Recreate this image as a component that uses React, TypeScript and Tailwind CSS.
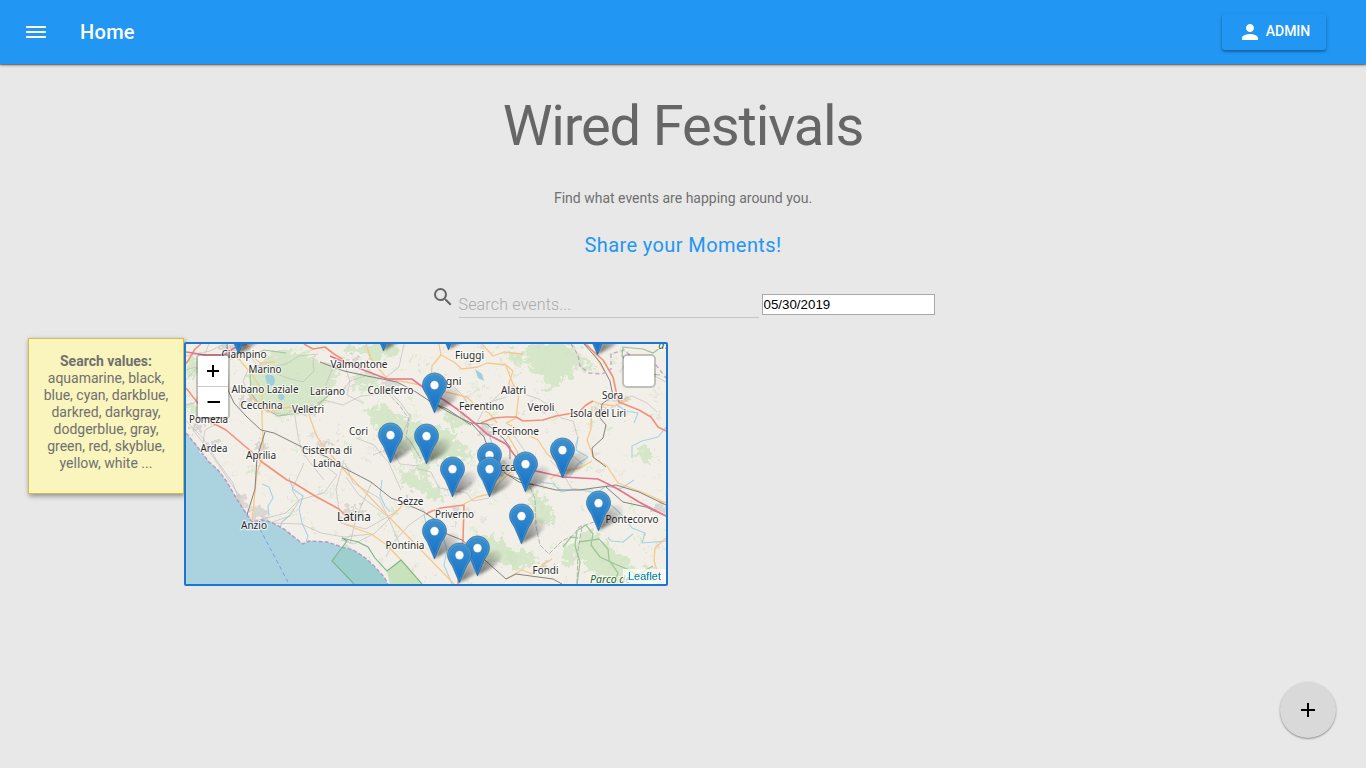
import React from "react";
import { MdAdd, MdPerson, MdSearch } from "react-icons/md";

type Pt = [number, number];

const PINS: Pt[] = [
  [238, 326], [383, 323], [448, 322], [597, 327],
  [434, 385], [390, 435], [426, 436], [562, 450], [489, 455], [525, 464], [452, 469], [489, 469],
  [598, 503], [521, 516], [434, 531], [477, 548], [459, 555],
];

type Label = { t: string; x: number; y: number; w: number; s?: number };

const LABELS: Label[] = [
  { t: "Ciampino", x: 244, y: 358, w: 45 },
  { t: "Marino", x: 265, y: 372.5, w: 33 },
  { t: "Albano Laziale", x: 265, y: 393, w: 67 },
  { t: "Cecchina", x: 261.5, y: 409, w: 42 },
  { t: "Lariano", x: 327.5, y: 394.5, w: 35 },
  { t: "Velletri", x: 308, y: 413, w: 32 },
  { t: "Valmontone", x: 359, y: 368, w: 57 },
  { t: "Colleferro", x: 390.5, y: 394, w: 46 },
  { t: "Fiuggi", x: 469.5, y: 359, w: 29 },
  { t: "Anagni", x: 444, y: 385, w: 35 },
  { t: "Ferentino", x: 481.5, y: 410, w: 45 },
  { t: "Alatri", x: 513.5, y: 394, w: 25 },
  { t: "Veroli", x: 541, y: 411, w: 27 },
  { t: "Sora", x: 612.5, y: 399, w: 21 },
  { t: "Isola del Liri", x: 598, y: 417, w: 56 },
  { t: "Frosinone", x: 515.5, y: 435, w: 47 },
  { t: "Pomezia", x: 208.5, y: 423, w: 39 },
  { t: "Ardea", x: 214, y: 451.5, w: 27 },
  { t: "Aprilia", x: 261, y: 458.5, w: 30 },
  { t: "Cori", x: 358.5, y: 434.5, w: 19 },
  { t: "Cisterna di", x: 327, y: 454, w: 50 },
  { t: "Latina", x: 327, y: 466.5, w: 28 },
  { t: "Ceccano", x: 508, y: 471, w: 40 },
  { t: "Sezze", x: 410.5, y: 505, w: 26 },
  { t: "Latina", x: 354, y: 521, w: 34, s: 12 },
  { t: "Priverno", x: 454.5, y: 517.5, w: 39 },
  { t: "Pontinia", x: 405, y: 549, w: 39 },
  { t: "Anzio", x: 254, y: 529, w: 26 },
  { t: "Fondi", x: 545.5, y: 574, w: 26 },
  { t: "Pontecorvo", x: 632, y: 523, w: 53 },
];

const WOODS = [
  "M264 358L280 350L306 353L316 361L334 364L338 378L331 392L318 405L302 411L286 417L270 412L258 407L254 397L250 376Z",
  "M344 344H400L398 358L385 354L375 367L365 352L348 355Z",
  "M352 377L367 371L380 378L376 389L357 388Z",
  "M365 410L385 404L396 416L411 419L428 424L444 429L456 436L463 446L474 454L469 462L449 456L439 462L417 459L400 447L381 440L374 425Z",
  "M526 344H573L580 356L594 366L590 373L577 366L568 377L558 386L547 388L543 376L531 370Z",
  "M506 350L519 353L531 361L526 367L511 360Z",
  "M577 535L592 530L604 542L619 552L627 562L638 571L653 568L660 579L640 584L605 581L590 569L576 556Z",
  "M567 545L576 545L573 565L560 562Z",
  "M524 486L536 490L546 500L555 516L551 526L541 520L530 524L533 508Z",
  "M399 470L414 474L427 481L439 488L444 502L430 498L421 490L409 487L401 481Z",
  "M470 538L492 535L506 545L519 557L512 568L493 561L479 565L471 552Z",
  "M412 464L424 461L431 470L428 481L419 474Z",
  "M635 449L652 448L654 455L646 465L633 455Z",
  "M186 395L194 404L206 406L199 416L186 413Z",
  "M188 356L198 358L194 379L187 380Z",
  "M445 410L463 417L470 427L456 429L443 419Z",
  "M506 552L524 549L538 560L530 568L511 570Z",
];

const TOWNS: [number, number, number, number][] = [
  [236, 350, 26, 12], [262, 367, 11, 8], [248, 401, 14, 8], [309, 410, 10, 9], [354, 361, 11, 7],
  [389, 384, 14, 8], [486, 429, 12, 10], [618, 401, 15, 8], [209, 420, 13, 9], [261, 447, 12, 9],
  [325, 444, 13, 8], [354, 513, 20, 12], [259, 514, 17, 9], [240, 502, 11, 11], [411, 497, 7, 4],
  [545, 568, 10, 6], [659, 508, 13, 8], [512, 390, 8, 6], [543, 409, 8, 5], [213, 446, 9, 7],
  [600, 411, 9, 5], [501, 465, 9, 9], [457, 513, 8, 5], [469, 356, 6, 4], [196, 429, 8, 8],
];

const MINOR_ROADS = [
  "M186 356L210 351L224 344", "M186 380L201 363L209 344", "M222 363L209 378L204 389L194 403L186 405",
  "M244 344L249 355L257 365L268 369L288 363L299 356L318 354", "M248 370L243 381L252 402L268 411L285 415L294 409",
  "M268 370L287 378L303 382L314 371L313 358", "M334 364L326 385L331 392L346 388", "M294 410L298 436L302 452L324 480",
  "M304 409L324 400L343 405L361 396L392 393", "M344 362L350 382L347 395L363 403", "M384 379L399 367L404 344",
  "M365 376L350 381L344 389", "M391 393L400 402L410 416L403 433L412 444L421 459",
  "M447 380L462 395L470 407L491 402L506 388",
  "M477 423L487 403L506 397", "M524 394L539 399L553 408L561 418L573 421L578 438L572 455L582 464",
  "M618 402L632 396L647 403L657 412", "M628 361L649 373L666 382",
  "M304 463L292 490L299 501L290 516L270 523", "M320 462L337 475L324 493L299 500L286 513L251 522L241 507",
  "M345 463L353 483L379 498L392 526L402 550", "M344 460L336 489L341 523L366 529L394 513",
  "M372 482L356 518L350 544", "M391 517L375 533L354 544L341 540",
  "M425 514L409 525L393 543L386 557", "M373 455L391 448L400 464L419 466",
  "M186 421L203 438L217 461L233 483L240 503L251 520", "M203 443L205 430L218 423",
  "M199 416L193 430L207 448L222 470L241 498", "M415 468L431 472L439 488L467 493L473 501L489 498",
  "M506 432L515 437L529 457L535 468",
  "M550 460L563 474L572 489L593 490",
  "M186 370L196 367L208 377L226 376", "M356 438L374 445L389 463L401 490",
  "M270 523L301 524L321 533L344 537L371 534", "M346 477L359 495L387 516",
];

const ORANGE = [
  "M234 350L242 363L251 373L262 390L262 420L264 454L257 472L252 521",
  "M309 415L317 437L331 455L344 470L387 515L454 584",
  "M344 524L371 534L387 545L401 560L422 584", "M391 517L404 504",
  "M439 344L441 355L454 362L462 369L478 367L487 363L506 365L513 371L506 392",
  "M441 355L432 366L431 380L442 391L467 397L477 407L489 413L497 423",
  "M384 378L406 382L430 387L443 391", "M387 378L377 367L371 359L366 344",
  "M464 504L477 497L489 494L501 481L513 470L518 453L506 432",
  "M506 366L513 384L519 393L516 418L506 423", "M506 423L524 433L538 440L547 454L557 462",
  "M593 401L600 404L615 406L621 402L631 399", "M592 406L591 429L587 440L594 458L607 466L618 483L644 493L666 503",
  "M666 538L655 548L654 561L661 584", "M506 579L522 570L532 574L543 565L552 559",
  "M247 346L252 356L260 363L275 362", "M249 395L268 412L289 407L309 412",
  "M482 344L493 356L504 352L523 354", "M604 371L593 352L587 344", "M550 479L562 471L580 468L592 461",
];

const RED = [
  "M186 388L201 407L211 422L226 430L253 453L262 462L287 480L294 483L315 496L339 509L346 516L356 521",
  "M426 514L432 511L441 508L464 505L463 540L460 560L458 584",
  "M481 423L494 418L506 417L516 417L523 421L543 420L556 416L579 412L586 405L593 401",
  "M584 343L603 360L613 377L616 391L619 402L639 410L651 417L658 427L666 431",
  "M304 344L313 349L325 347L334 354L344 360", "M186 364L195 349L201 344",
];

const RAIL = [
  "M227 344L228 390L234 403L246 416L261 430L274 433L302 447L327 457L344 468L371 482L391 498L404 503L424 512L434 519L447 534L462 540L487 562L506 579L516 574L553 579L562 584",
  "M265 432L257 458L255 489L247 515",
  "M320 362L344 371L367 376L397 382L416 392L431 402L454 415L471 423L484 437L491 457L506 474L531 484L556 490L579 490L616 485L639 492L666 505",
  "M430 402L447 409L471 425", "M606 487L623 502L646 507L666 516",
  "M584 344L600 362L610 381L613 396L602 404L600 418L606 425L603 438L592 448L593 457L606 467",
  "M471 423L487 424L503 438L510 447L510 459", "M508 475L519 482L534 485",
];

const WATER = [
  "M262 484L269 487L273 498L268 506L269 516", "M289 478L293 489L303 496L299 509L302 523L308 536L306 542",
  "M290 515L282 522L280 528", "M382 480L380 495L385 506L390 512", "M424 514L426 524",
  "M443 536L447 550L444 565L452 584",
  "M610 504L621 514L632 528L645 533L642 543L666 541", "M633 534L623 542L611 541L608 537",
  "M666 427L658 437L642 441L632 446L632 458", "M578 437L576 450L588 457L578 464L569 478",
  "M540 482L554 484L561 492L575 489L597 493L606 486L620 489L634 480", "M616 404L626 411L638 413L634 423",
  "M488 432L493 446L501 452",
];

const COAST = "M186 433L196 445L209 462L218 470L227 482L236 498L247 515L252 522L262 520L271 522L284 529L294 537L303 544L309 541L327 542L345 548L353 550L364 557L374 566L384 577L388 584";

const PATCHES = Array.from({ length: 520 }, (_, i) => {
  const a = Math.abs(Math.sin(i * 12.9898 + 4.1) * 43758.5453) % 1;
  const b = Math.abs(Math.sin(i * 78.233 + 1.7) * 12543.1234) % 1;
  const c = Math.abs(Math.sin(i * 39.425 + 2.3) * 7531.357) % 1;
  return { x: 186 + a * 480, y: 344 + b * 240, r: 0.7 + c * 2.2, k: i % 4 };
});

const PATCH_FILL = ["#dedcd7", "#dcebcd", "#eae8df", "#d5e7c8"];

function Pin({ x, y }: { x: number; y: number }) {
  return (
    <g transform={`translate(${x - 12} ${y - 12.5})`}>
      <path
        d="M12.5 .5C5.9 .5 .5 5.9 .5 12.4C.5 17 3.2 19.8 5.5 24L12.5 40.4L19.5 24C21.8 19.8 24.5 17 24.5 12.4C24.5 5.9 19.1 .5 12.5 .5Z"
        fill="url(#pin)" stroke="#2e6c97" strokeOpacity=".8" strokeWidth=".8"
      />
      <path
        d="M12.5 1.6C6.5 1.6 1.6 6.5 1.6 12.4C1.6 16.6 4.2 19.4 6.5 23.5L12.5 37.6L18.5 23.5C20.8 19.4 23.4 16.6 23.4 12.4C23.4 6.5 18.5 1.6 12.5 1.6Z"
        fill="none" stroke="#fff" strokeOpacity=".13" strokeWidth="1"
      />
      <circle cx="12.5" cy="12.6" r="4.3" fill="#fff" stroke="#2e6c97" strokeOpacity=".5" strokeWidth=".5" />
    </g>
  );
}

function Lines({ list, color, width, opacity }: { list: string[]; color: string; width: number; opacity?: number }) {
  return (
    <g fill="none" stroke={color} strokeWidth={width} strokeOpacity={opacity ?? 1} strokeLinejoin="round">
      {list.map((d) => <path key={d} d={d} />)}
    </g>
  );
}

function MapDrawing() {
  return (
    <svg className="block h-[240px] w-[480px]" viewBox="186 344 480 240">
      <defs>
        <linearGradient id="pin" x1="0" y1="0" x2="0" y2="1">
          <stop offset="0" stopColor="#3f92cf" />
          <stop offset="1" stopColor="#126fc6" />
        </linearGradient>
        <linearGradient id="shade" x1="0" y1="1" x2="1" y2="0">
          <stop offset="0" stopColor="#000" stopOpacity=".6" />
          <stop offset=".85" stopColor="#000" stopOpacity=".08" />
        </linearGradient>
        <filter id="soft" x="-30%" y="-30%" width="160%" height="160%"><feGaussianBlur stdDeviation="1.6" /></filter>
        <filter id="rough" x="-10%" y="-10%" width="120%" height="120%">
          <feTurbulence type="fractalNoise" baseFrequency=".16" numOctaves="3" seed="4" result="n" />
          <feDisplacementMap in="SourceGraphic" in2="n" scale="20" xChannelSelector="R" yChannelSelector="G" />
        </filter>
      </defs>
      <rect x="186" y="344" width="480" height="240" fill="#f2efe9" />
      <g filter="url(#rough)">
        {PATCHES.map((p, i) => <circle key={i} cx={p.x} cy={p.y} r={p.r} fill={PATCH_FILL[p.k]} fillOpacity=".75" />)}
        {WOODS.map((d) => <path key={d} d={d} fill="#cfe4c1" fillOpacity=".8" />)}
        {TOWNS.map(([x, y, w, h]) => <ellipse key={`${x}-${y}`} cx={x} cy={y} rx={w * 0.6} ry={h * 0.6} fill="#dad7d2" />)}
      </g>
      <path d="M265 376C268 372 275 375 275 380C275 386 271 387 267 384Z M278 395C281 391 286 395 284 399C281 402 277 399 278 395Z M475 369L482 374L484 381L478 378Z" fill="#9fcfdb" />
      <path d="M247 358L264 350L286 353M250 371L251 394L262 407L278 416L300 413L318 405L332 392" fill="none" stroke="#9cc794" strokeWidth="1.2" />
      <Lines list={WATER} color="#a5d3e3" width={1.1} />
      <Lines list={MINOR_ROADS} color="#bdbaba" width={0.8} opacity={0.8} />
      <Lines list={ORANGE} color="#f7c88a" width={1.3} />
      <Lines list={RED} color="#f29178" width={1.6} />
      <Lines list={RAIL} color="#85817e" width={1} />
      <path d="M186 352L205 355L224 355L234 348L247 344M330 356L344 362L366 371L387 379L412 379L424 388L444 400L457 409L477 425L487 434L506 444L516 457L525 466L536 471L563 477L598 479L616 488L639 502L666 516" fill="none" stroke="#e6738f" strokeWidth="1.7" />
      <path d={`${COAST}H186Z`} fill="#aad3df" />
      <path d={COAST} fill="none" stroke="#b795c6" strokeWidth="1.4" strokeDasharray="4 2" />
      <path d="M346 544L332 561L354 584H388L374 566L360 555Z" fill="#86c8b4" fillOpacity=".35" />
      <path d="M387 571L401 560L422 584H390Z" fill="#c8e2bb" />
      <path d="M354 584L332 561L347 541L342 538L358 542L368 547L375 558L387 571L401 560L422 584" fill="none" stroke="#79b38a" strokeWidth="1.1" />
      <path d="M260 529L289 584" stroke="#718fe5" strokeWidth=".8" strokeDasharray="4 3" fill="none" />
      <path d="M578 530L586 525L593 534L591 545L600 557L615 564L627 569L637 575L653 566M579 542L599 539L608 549L609 560L618 573L614 584M577 530L575 546L580 562L577 584M563 547L571 537L578 538" fill="none" stroke="#9cc794" strokeWidth="1.3" />
      <path d="M387 392L400 406L409 419L406 437L412 444L421 459M528 482L535 499L536 526L540 545L549 554L562 541L574 535L579 527L594 522M582 527L578 550L577 584" fill="none" stroke="#b1aeb4" strokeWidth=".9" strokeDasharray="5 1.5" />
      <path d="M571 344L578 355L580 366L589 373L602 374L611 369L611 354L624 350L638 362L649 368L656 365L666 378" fill="none" stroke="#cba2d0" strokeWidth="1.4" strokeDasharray="4 3" />
      <path d="M622 347L643 349L653 353L666 344M623 347L622 356L637 373L660 375" fill="none" stroke="#9cc294" strokeWidth="1.2" />

      <g fontFamily="'Noto Sans', sans-serif" textAnchor="middle" fill="#2a2a2a" stroke="#fff" strokeOpacity=".7" strokeWidth="2.4" strokeLinejoin="round" style={{ paintOrder: "stroke" }}>
        {LABELS.map((l) => (
          <text key={`${l.t}${l.y}`} x={l.x} y={l.y} fontSize={l.s ?? 10.5} textLength={l.w} lengthAdjust="spacingAndGlyphs">{l.t}</text>
        ))}
        <text x="590" y="582.5" fontSize="10.5" fontStyle="italic" fill="#28652a" textAnchor="start">Parco de</text>
        <text x="665" y="349" fontSize="10.5" fontStyle="italic" fill="#28652a">d'A</text>
      </g>

      <g filter="url(#soft)">
        {PINS.map(([x, y]) => (
          <path key={`${x}-${y}`} transform={`translate(${x + 0.5} ${y + 27.5})`} d="M0 0L6 -15C8 -23 17 -27 22 -24C27 -20 22 -13 15 -8Z" fill="url(#shade)" />
        ))}
      </g>
      {PINS.map(([x, y]) => <Pin key={`${x}-${y}`} x={x} y={y} />)}
    </svg>
  );
}

export default function App() {
  return (
    <div className="relative flex h-[768px] w-full flex-col overflow-hidden bg-[#e8e8e8] font-[Roboto,sans-serif] text-[#666]">
      <header className="z-10 flex h-16 shrink-0 items-center bg-[#2196f3] pr-10 pl-6 text-white shadow-[0_1px_3px_rgba(0,0,0,0.45),0_1px_1px_rgba(0,0,0,0.3)]">
        <button aria-label="Menu">
          <svg width="24" height="24" viewBox="0 0 24 24" fill="currentColor"><path d="M2.2 6H21.8V8H2.2ZM2.2 11H21.8V13H2.2ZM2.2 16H21.8V18H2.2Z" /></svg>
        </button>
        <h1 className="ml-8 text-xl font-medium tracking-[0.3px]">Home</h1>
        <button className="mb-px ml-auto flex h-9 w-[104px] items-center justify-center gap-1 rounded-[3px] text-sm font-medium shadow-[0_2px_2px_rgba(0,0,0,0.22),0_1px_4px_rgba(0,0,0,0.18)]">
          <MdPerson size={24} />
          <span className="pb-0.5">ADMIN</span>
        </button>
      </header>

      <main className="flex flex-col">
        <div className="flex flex-col items-center">
          <h2 className="mt-[30px] text-[56px] leading-[64px] tracking-[-1.12px]">Wired Festivals</h2>
          <p className="mt-[30px] text-sm leading-5 text-[#707070]">Find what events are happing around you.</p>
          <p className="mt-6 text-xl leading-[26px] tracking-[0.4px] text-[#2196f3]">Share your Moments!</p>
          <div className="mt-[26px] flex h-[34px] w-[505px] items-start">
            <MdSearch size={24} className="mt-px shrink-0" />
            <input placeholder="Search events..." className="ml-1 h-[34px] w-[300px] shrink-0 border-b border-[#c6c6c6] bg-transparent pt-2 text-base font-light tracking-[0.17px] placeholder:text-[#aaa] focus:outline-none" />
            <input defaultValue="05/30/2019" className="mt-[10px] ml-[3px] h-[21px] w-[173px] shrink-0 border border-[#a9a9a9] bg-white px-px font-['Liberation_Sans',sans-serif] text-[13.33px] text-black" />
          </div>
        </div>

        <div className="mt-5 flex items-start pl-7">
          <aside className="h-[156px] w-[156px] border border-[#d0bd4c] bg-[#faf4bd] px-2 pt-[14px] text-center text-sm leading-[17px] text-[#707070] shadow-[1px_2px_5px_rgba(0,0,0,0.4)]">
            <strong className="block font-bold">Search values:</strong>
            aquamarine, black,<br />blue, cyan, darkblue,<br />darkred, darkgray,<br />dodgerblue, gray,<br />green, red, skyblue,<br />yellow, white ...
          </aside>
          <section className="relative mt-1 h-[244px] w-[484px] overflow-hidden rounded-[2px] border-2 border-[#1976d2]">
            <MapDrawing />
            <div className="absolute top-[10px] left-[10px] flex flex-col rounded border-2 border-black/20 bg-clip-padding text-black">
              <button aria-label="Zoom in" className="flex h-[31px] w-[30px] items-center justify-center rounded-t-[2px] border-b border-[#ccc] bg-white">
                <svg width="14" height="14" viewBox="0 0 14 14"><path d="M1 7H13M7 1V13" stroke="#000" strokeWidth="2" /></svg>
              </button>
              <button aria-label="Zoom out" className="flex h-[30px] w-[30px] items-center justify-center rounded-b-[2px] bg-white">
                <svg width="14" height="14" viewBox="0 0 14 14"><path d="M1.5 7H14" stroke="#000" strokeWidth="2" /></svg>
              </button>
            </div>
            <div className="absolute top-[10px] right-[10px] h-[34px] w-[34px] rounded-[5px] border-2 border-black/20 bg-white bg-clip-padding" />
            <div className="absolute right-0 bottom-0 bg-white/70 px-[5px] font-['Liberation_Sans',sans-serif] text-[11px] leading-[15px] text-[#0078a8]">Leaflet</div>
          </section>
        </div>
      </main>

      <button aria-label="Add" className="absolute right-[30px] bottom-[30px] flex size-14 items-center justify-center rounded-full bg-[#d9d9d9] text-black shadow-[0_1px_2px_rgba(0,0,0,0.4)]">
        <MdAdd size={24} />
      </button>
    </div>
  );
}
